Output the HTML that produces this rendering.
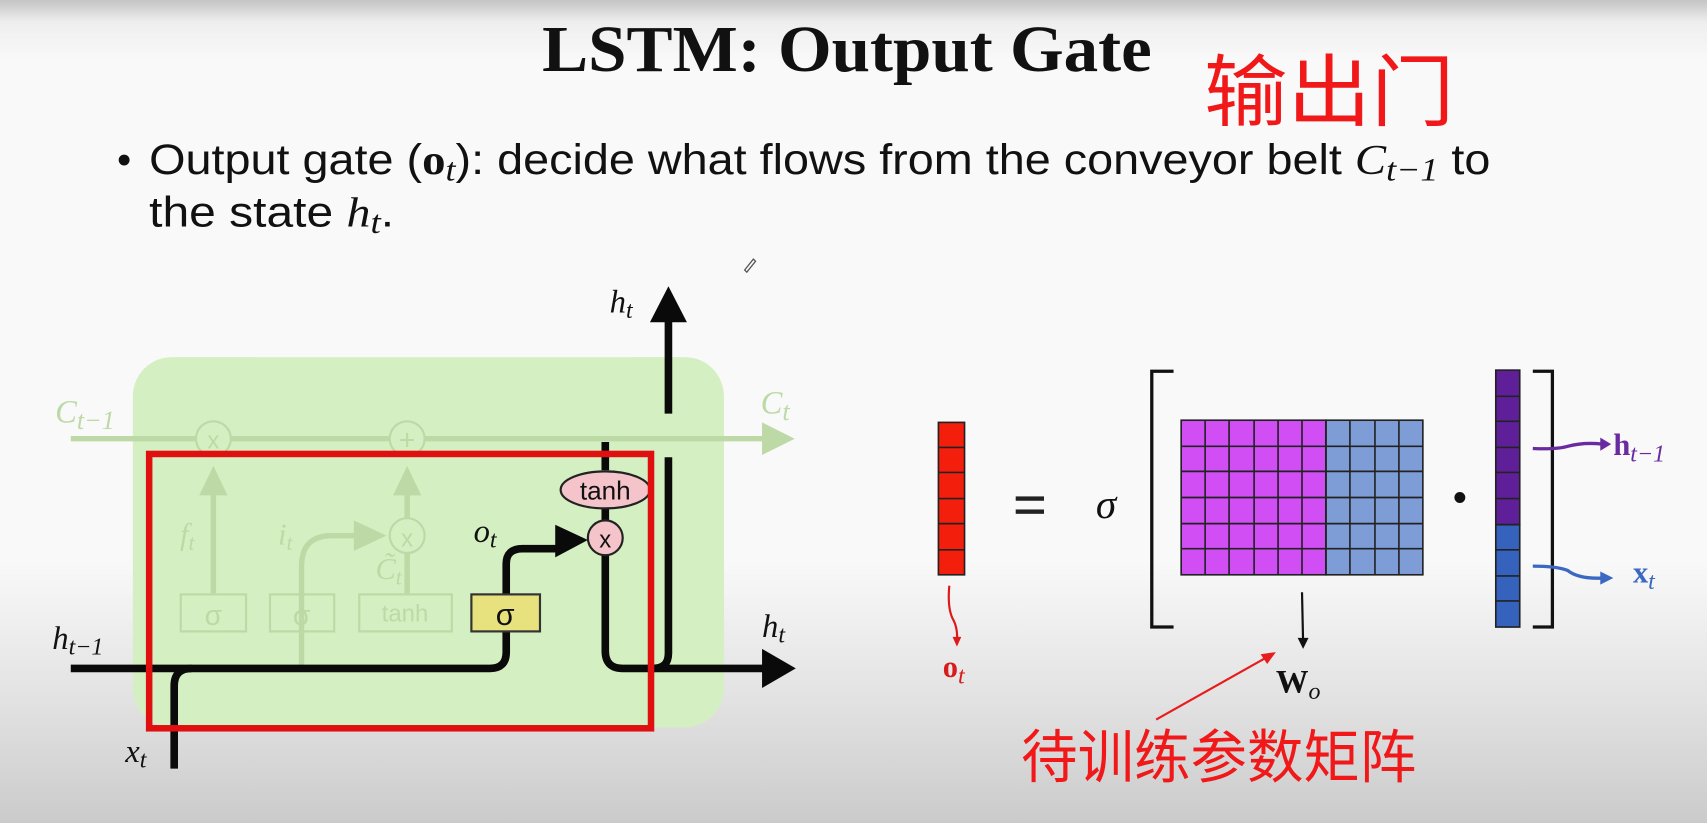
<!DOCTYPE html>
<html><head><meta charset="utf-8"><style>
html,body{margin:0;padding:0;width:1707px;height:823px;overflow:hidden}
body{background:linear-gradient(#c4c4c4 0px,#eeeeee 22px,#f9f9f9 60px,#f9f9f9 560px,#e2e2e2 700px,#cbcbcb 823px)}
svg{position:absolute;left:0;top:0}
text{font-family:"Liberation Sans","Noto Sans CJK SC",sans-serif}
.serif{font-family:"Liberation Serif","DejaVu Serif",serif}
</style></head><body>
<svg width="1707" height="823" viewBox="0 0 1568 756">
<text x="778" y="65" text-anchor="middle" class="serif" font-weight="bold" font-size="60" textLength="560" lengthAdjust="spacingAndGlyphs" fill="#111">LSTM: Output Gate</text>
<text x="1106" y="110" font-size="72" fill="#f01818" font-family="'Noto Sans CJK SC',sans-serif" textLength="230" lengthAdjust="spacingAndGlyphs">输出门</text>
<circle cx="114" cy="147" r="5" fill="#111"/>
<text x="137" y="160" font-size="39" fill="#111" textLength="1232" lengthAdjust="spacingAndGlyphs">Output gate (<tspan font-weight="bold" class="serif">o</tspan><tspan class="serif" font-style="italic" font-size="30" dy="6">t</tspan><tspan dy="-6">): decide what flows from the conveyor belt </tspan><tspan class="serif" font-style="italic">C</tspan><tspan class="serif" font-style="italic" font-size="30" dy="6">t−1</tspan><tspan dy="-6"> to</tspan></text>
<text x="137" y="208" font-size="39" fill="#111" textLength="225" lengthAdjust="spacingAndGlyphs">the state <tspan class="serif" font-style="italic">h</tspan><tspan class="serif" font-style="italic" font-size="30" dy="6">t</tspan><tspan dy="-6">.</tspan></text>
<path d="M684,248 l8,-10 l2,2 l-8,10z" fill="none" stroke="#555" stroke-width="1.2"/>

<rect x="122" y="328" width="543" height="340" rx="36" fill="#d4f0c2"/>
<g stroke="#bcd9a6" fill="none" stroke-width="5">
<line x1="65" y1="403" x2="705" y2="403"/>
<line x1="196" y1="545" x2="196" y2="440"/>
<line x1="374" y1="545" x2="374" y2="440"/>
<path d="M277,612 V520 Q277,492 305,492 H330"/>
<rect x="166" y="546" width="60" height="34" stroke-width="2"/>
<rect x="248" y="546" width="59" height="34" stroke-width="2"/>
<rect x="330" y="546" width="85" height="34" stroke-width="2"/>
<circle cx="196" cy="403" r="16" stroke-width="2" fill="#d4f0c2"/>
<circle cx="374" cy="403" r="16" stroke-width="2" fill="#d4f0c2"/>
<circle cx="374" cy="492" r="16" stroke-width="2" fill="#d4f0c2"/>
</g>
<g fill="#bcd9a6">
<path d="M700,388 L730,403 L700,418z"/>
<path d="M183,455 L196,428 L209,455z"/>
<path d="M361,455 L374,428 L387,455z"/>
<path d="M325,478 L355,492 L325,506z"/>
</g>
<g fill="#bcd9a6" font-size="26" text-anchor="middle">
<text x="196" y="412" font-size="22">x</text><text x="374" y="413" font-size="26">+</text><text x="374" y="502" font-size="22">x</text>
<text x="196" y="574">σ</text><text x="277" y="574">σ</text><text x="372" y="571" font-size="22">tanh</text>
<text class="serif" font-style="italic" x="172" y="500" font-size="28">f<tspan font-size="20" dy="5">t</tspan></text>
<text class="serif" font-style="italic" x="262" y="500" font-size="28">i<tspan font-size="20" dy="5">t</tspan></text>
<text class="serif" font-style="italic" x="357" y="532" font-size="28">C̃<tspan font-size="20" dy="5">t</tspan></text>
<text class="serif" font-style="italic" x="78" y="388" font-size="30">C<tspan font-size="24" dy="6">t−1</tspan></text>
<text class="serif" font-style="italic" x="712" y="380" font-size="30">C<tspan font-size="24" dy="6">t</tspan></text>
</g>

<g stroke="#0a0a0a" fill="none" stroke-width="7">
<path d="M65,614 H450 Q465,614 465,599 V580"/>
<path d="M160,706 V630 Q160,614 176,614"/>
<path d="M465,546 V518 Q465,504 480,504 H515"/>
<path d="M556,406 V432"/>
<path d="M556,467 V478"/>
<path d="M556,510 V598 Q556,614 572,614 H705"/>
<path d="M614,420 V600 Q614,614 600,614"/>
<path d="M614,380 V290"/>
</g>
<path d="M700,596 L731,614 L700,632z" fill="#0a0a0a"/>
<path d="M597,296 L614,263 L631,296z" fill="#0a0a0a"/>
<path d="M510,482 L540,496 L510,512z" fill="#0a0a0a"/>
<ellipse cx="556" cy="450" rx="41" ry="17" fill="#f5c4ca" stroke="#222" stroke-width="2"/>
<text x="556" y="459" text-anchor="middle" font-size="24" fill="#111">tanh</text>
<circle cx="556" cy="494" r="16" fill="#f5c4ca" stroke="#222" stroke-width="2"/>
<text x="556" y="503" text-anchor="middle" font-size="22" fill="#111">x</text>
<rect x="433" y="546" width="63" height="34" fill="#e8e27e" stroke="#333" stroke-width="2"/>
<text x="464" y="574" text-anchor="middle" font-size="28" fill="#111">σ</text>
<g class="serif" font-style="italic" font-size="30" fill="#111">
<text x="435" y="498" class="serif">o<tspan font-size="22" dy="5">t</tspan></text>
<text x="560" y="287" class="serif">h<tspan font-size="22" dy="5">t</tspan></text>
<text x="700" y="585" class="serif">h<tspan font-size="22" dy="5">t</tspan></text>
<text x="48" y="596" class="serif">h<tspan font-size="22" dy="5">t−1</tspan></text>
<text x="115" y="700" class="serif">x<tspan font-size="22" dy="5">t</tspan></text>
</g>
<rect x="137" y="417" width="461" height="252" fill="none" stroke="#e01010" stroke-width="6"/>

<g stroke="#222" stroke-width="1.5">
<rect x="862" y="388" width="24" height="140" fill="#f41e0c"/>
<line x1="862" y1="411" x2="886" y2="411"/><line x1="862" y1="434" x2="886" y2="434"/><line x1="862" y1="458" x2="886" y2="458"/><line x1="862" y1="481" x2="886" y2="481"/><line x1="862" y1="505" x2="886" y2="505"/>
<rect x="1085" y="386" width="133" height="142" fill="#d04ef4"/>
<rect x="1218" y="386" width="89" height="142" fill="#7e9cd6"/>
<path d="M1107,386V528M1129,386V528M1152,386V528M1174,386V528M1196,386V528M1218,386V528M1240,386V528M1263,386V528M1285,386V528M1085,410H1307M1085,433H1307M1085,457H1307M1085,481H1307M1085,504H1307" fill="none"/>
<rect x="1374" y="340" width="22" height="142" fill="#5f1f98"/>
<rect x="1374" y="482" width="22" height="94" fill="#3462bd"/>
<path d="M1374,364H1396M1374,387H1396M1374,411H1396M1374,434H1396M1374,458H1396M1374,482H1396M1374,505H1396M1374,529H1396M1374,552H1396" fill="none"/>
</g>
<path d="M1078,341 H1058 V576 H1078" fill="none" stroke="#111" stroke-width="3"/>
<path d="M1408,341 H1426 V576 H1408" fill="none" stroke="#111" stroke-width="3"/>
<rect x="933" y="456" width="26" height="4" fill="#222"/><rect x="933" y="468" width="26" height="4" fill="#222"/>
<text x="1016" y="476" text-anchor="middle" class="serif" font-style="italic" font-size="38" fill="#111">σ</text>
<circle cx="1341" cy="457" r="5" fill="#111"/>
<path d="M1408,412 Q1430,413 1440,410 Q1455,406 1472,408" fill="none" stroke="#6a2aa0" stroke-width="3"/>
<path d="M1470,402 L1480,408 L1470,414z" fill="#6a2aa0"/>
<text x="1482" y="418" class="serif" font-weight="bold" font-size="28" fill="#6a2aa0">h<tspan font-style="italic" font-weight="normal" font-size="22" dy="6">t−1</tspan></text>
<path d="M1408,520 Q1430,520 1440,524 Q1450,532 1472,531" fill="none" stroke="#3a68c2" stroke-width="3"/>
<path d="M1470,525 L1482,531 L1470,537z" fill="#3a68c2"/>
<text x="1500" y="535" class="serif" font-weight="bold" font-size="28" fill="#3a68c2">x<tspan font-style="italic" font-weight="normal" font-size="22" dy="6">t</tspan></text>
<path d="M872,538 Q870,560 876,570 Q880,578 879,590" fill="none" stroke="#e01818" stroke-width="2"/>
<path d="M875,585 L879,594 L883,585z" fill="#e01818"/>
<text x="866" y="622" class="serif" font-weight="bold" font-size="28" fill="#d81c1c">o<tspan font-style="italic" font-weight="normal" font-size="22" dy="6">t</tspan></text>
<line x1="1196" y1="544" x2="1197" y2="590" stroke="#111" stroke-width="2"/>
<path d="M1192,586 L1197,596 L1202,586z" fill="#111"/>
<text x="1172" y="636" class="serif" font-weight="bold" font-size="30" fill="#111">W<tspan font-style="italic" font-weight="normal" font-size="22" dy="6">o</tspan></text>
<line x1="1062" y1="661" x2="1165" y2="603" stroke="#e81c1c" stroke-width="2"/>
<path d="M1158,601 L1172,599 L1164,610z" fill="#e81c1c"/>
<text x="938" y="714" font-size="53" fill="#f01818" font-family="'Noto Sans CJK SC',sans-serif" textLength="363" lengthAdjust="spacingAndGlyphs">待训练参数矩阵</text>
</svg>
</body></html>
